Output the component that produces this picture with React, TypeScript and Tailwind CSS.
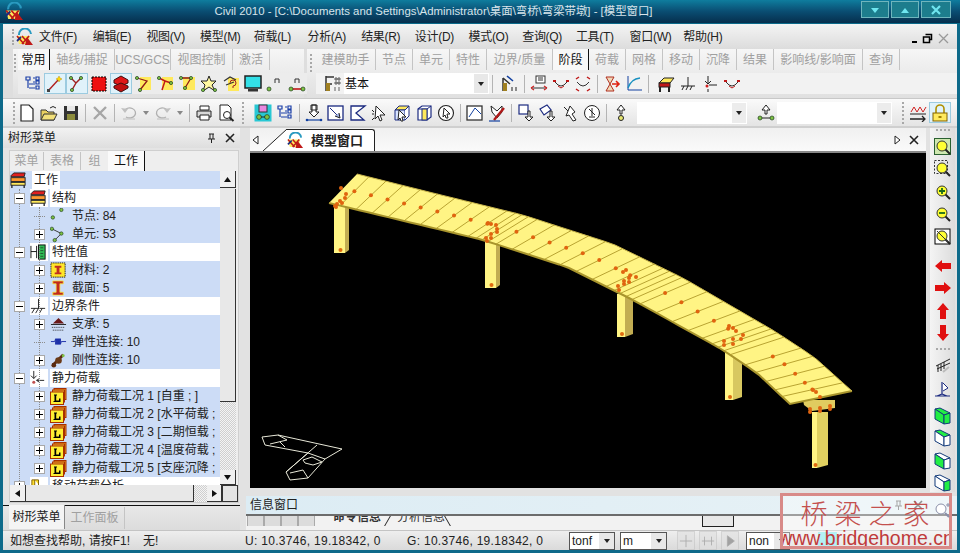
import React from 'react';

const FONT = "font-['Liberation_Sans','Noto_Sans_CJK_SC',sans-serif]";

// ---- small svg helpers ----
const N = ({ x, y, r = 1.6 }: { x: number; y: number; r?: number }) => (
  <circle cx={x} cy={y} r={r} fill="#7dc242" stroke="#1f3d1f" strokeWidth="0.7" />
);

const Lens = ({ children, box }: { children?: React.ReactNode; box?: boolean }) => (
  <>
    {box && <rect x="1" y="1" width="15" height="15" fill="#fff" stroke="#000" strokeWidth="1" />}
    <circle cx="8" cy="8" r="5" fill="#ffff33" stroke="#333" strokeWidth="1" />
    <path d="M11.5 11.5L16 16" stroke="#222" strokeWidth="2" />
    {children}
  </>
);

const Cube = ({ face }: { face: string }) => {
  const top = face === 'all' || face === 'top' ? '#22ee44' : '#fff';
  const left = face === 'all' || face === 'left' ? '#22ee44' : '#fff';
  const front = face === 'all' || face === 'front' ? '#22ee44' : '#fff';
  return (
    <>
      <path d="M1 2L6 1L16 6L10 8Z" fill={top} stroke="#123a7a" />
      <path d="M1 2L10 8V17L1 12Z" fill={left} stroke="#123a7a" />
      <path d="M10 8L16 6V16L10 17Z" fill={front} stroke="#123a7a" />
    </>
  );
};

const LoadIcon = () => (
  <svg width="17" height="17" viewBox="0 0 17 17" className="shrink-0">
    <rect x="4" y="0.5" width="12" height="11" fill="#f0a020" stroke="#a83000" />
    <rect x="2.5" y="2" width="12" height="12" fill="#f6b030" stroke="#a83000" />
    <rect x="0.5" y="4" width="13" height="12.5" fill="#ffee33" stroke="#a83000" />
    <path d="M4 6.5H7V7.5H6.2V12.5H9V10.5H10.5V14H3.5V13H4.5V7.5H4Z" fill="#000" />
  </svg>
);

const icons: Record<string, React.ReactNode> = {
  tree: <path d="M2 2H6V5H2ZM9 3H11M9 7H11M5 9H11M5 13H11M4 5V13M12 2H15V5H12ZM12 6H15V9H12ZM12 11H15V14H12Z" fill="none" stroke="#1b3fa8" strokeWidth="1.2" />,
  wand: <><path d="M2 16L13 4" stroke="#b02020" strokeWidth="1.4" /><path d="M13 1L14 3L16 4L14 5L13 7L12 5L10 4L12 3Z" fill="#ffd800" stroke="#b08000" strokeWidth="0.4" /><rect x="1" y="14" width="3" height="3" fill="#444" /></>,
  nodeLine: <><path d="M3 3L8 8M13 3L8 8L4 15" stroke="#a02020" strokeWidth="1.4" fill="none" /><N x={3} y={3} /><N x={13} y={3} /><N x={4} y={15} /></>,
  redSq: <><rect x="2" y="2" width="14" height="14" fill="#ee1111" stroke="#000" strokeDasharray="2 1" /></>,
  layers: <><path d="M9 1L16 5V8L9 11L2 8V5Z" fill="#e01818" stroke="#401010" /><path d="M9 8L16 11V13L9 17L2 13V11Z" fill="#c01010" stroke="#401010" /></>,
  yNode1: <><rect x="6" y="2" width="11" height="13" fill="#ffe95c" /><path d="M3 3L13 6L6 15" stroke="#901818" strokeWidth="1.3" fill="none" /><N x={3} y={3} /><N x={6} y={15} /></>,
  yNode2: <><rect x="6" y="2" width="11" height="13" fill="#ffe95c" /><path d="M3 3L9 6L6 15M9 6L15 8" stroke="#c01818" strokeWidth="1.5" fill="none" /><N x={3} y={3} /><N x={15} y={8} /></>,
  yNode3: <><rect x="5" y="2" width="12" height="13" fill="#ffe95c" /><path d="M3 3H13L7 13" stroke="#901818" strokeWidth="1.3" fill="none" /><N x={3} y={3} /><N x={13} y={3} /><N x={7} y={13} /></>,
  star: <><path d="M9 1L11 6H16L12 10L15 16L9 12L3 16L5 10L1 6H7Z" fill="#fff8a0" stroke="#222" /><N x={3} y={15} /><N x={15} y={15} /></>,
  help: <><rect x="6" y="3" width="11" height="13" fill="#ffe95c" /><path d="M2 6L8 2L14 5M4 10L12 7" stroke="#333" fill="none" strokeWidth="1.2" /><path d="M8 8A3 3 0 1 1 11 11V13" stroke="#a02020" fill="none" /></>,
  monitor: <><rect x="1" y="1" width="16" height="12" fill="#33e0e8" stroke="#222" strokeWidth="1.5" /><rect x="4" y="14" width="10" height="2.5" fill="#333" /></>,
  n1: <><N x={3} y={14} r={2} /><path d="M9 8V4H13V8" stroke="#333" fill="none" /></>,
  n2: <><path d="M3 14H15" stroke="#c01818" strokeWidth="1.6" /><N x={3} y={14} r={2} /><N x={15} y={14} r={2} /><path d="M7 8V4H11V8" stroke="#333" fill="none" /></>,
  sectionT: <><path d="M2 1V16M2 2H10M2 9H8" stroke="#333" strokeWidth="1.5" /><rect x="2" y="8" width="4" height="8" fill="#a08020" /><path d="M11 3h2v2h-2zM14 3h2v2h-2zM11 7h2v2h-2zM11 12V16M15 12V16M14 7h2v2h-2z" stroke="#222" fill="none" strokeWidth="0.7" /></>,
  sectionT2: <><path d="M2 3V16M2 3L9 9" stroke="#333" strokeWidth="1.5" /><path d="M6 1L12 6" stroke="#1240a0" strokeWidth="1.6" /><rect x="2" y="8" width="4" height="8" fill="#a08020" /><path d="M11 12V16M15 12V16" stroke="#222" /></>,
  ruler: <><rect x="6" y="1" width="9" height="7" fill="#fff" stroke="#333" /><path d="M8 3H13M8 5H13M1 13H17" stroke="#333" /><path d="M1 13L4 11M1 13L4 15M17 13L14 11M17 13L14 15" stroke="#d02020" strokeWidth="1.2" /></>,
  sag: <><path d="M1 6H4M14 6H17" stroke="#c01818" strokeWidth="2" /><path d="M3 7Q9 15 15 7" stroke="#333" fill="none" /><path d="M6 11L9 13L12 11" stroke="#c01818" fill="none" /></>,
  sag2: <><path d="M2 4L5 2M16 4L13 2M2 14L5 16M16 14L13 16" stroke="#c01818" strokeWidth="1.5" /><path d="M3 7Q9 15 15 7" stroke="#333" fill="none" /></>,
  hourglass: <><path d="M3 2H11L7 9L11 16H3L7 9Z" fill="#f0d8b8" stroke="#b03020" /><path d="M9 9H16M13 6L16 9L13 12" stroke="#e02010" strokeWidth="1.6" fill="none" /></>,
  curve: <><path d="M3 1V15H17" stroke="#1240a0" fill="none" /><path d="M3 13Q6 4 15 3" stroke="#1890c0" fill="none" strokeWidth="1.3" /></>,
  block: <><path d="M2 8L7 3H17L13 8Z" fill="#ffe95c" stroke="#222" /><rect x="2" y="8" width="11" height="4" fill="#c01818" stroke="#222" /><path d="M3 12V17M12 12V17" stroke="#222" strokeWidth="2" /></>,
  ground: <path d="M9 2V11M2 11H16M3 15L5 11M7 15L9 11M11 15L13 11" stroke="#222" fill="none" />,
  loadArrow: <><path d="M7 1V9M4 6L7 9L10 6M8 10H16" stroke="#222" fill="none" /><circle cx="6" cy="11" r="1.5" fill="#d02020" /><path d="M7 14V17" stroke="#222" /></>,
  page: <path d="M3 1H11L15 5V17H3Z" fill="#fff" stroke="#222" strokeWidth="1.2" />,
  open: <><path d="M1 6H6L8 8H14V16H1Z" fill="#e8d060" stroke="#333" /><path d="M1 16L4 10H17L14 16Z" fill="#f2e07a" stroke="#333" /><path d="M10 4Q13 1 16 4" stroke="#222" fill="none" /></>,
  save: <><rect x="2" y="2" width="14" height="14" fill="#333" /><rect x="5" y="2" width="8" height="5" fill="#e8e8e8" /><rect x="5" y="10" width="8" height="6" fill="#8c8c3c" /></>,
  del: <path d="M3 3L15 15M15 3L3 15" stroke="#a6a6a6" strokeWidth="2.4" />,
  undo: <><path d="M4 7A6 5 0 1 1 6 13" stroke="#b0b0b0" fill="none" strokeWidth="1.3" /><path d="M1 4L5 9L8 5Z" fill="#c0c0c0" /><path d="M3 15H15" stroke="#c0c0c0" /></>,
  redo: <><path d="M14 7A6 5 0 1 0 12 13" stroke="#b0b0b0" fill="none" strokeWidth="1.3" /><path d="M17 4L13 9L10 5Z" fill="#c0c0c0" /><path d="M3 15H15" stroke="#c0c0c0" /></>,
  print: <><path d="M5 2H14V6H5Z" fill="#fff" stroke="#222" /><path d="M2 7H16V13H2Z" fill="#d8d8d8" stroke="#222" /><path d="M5 11H14V16H5Z" fill="#fff" stroke="#222" /></>,
  preview: <><path d="M3 1H11L14 4V16H3Z" fill="#fff" stroke="#222" /><circle cx="10" cy="11" r="3.5" fill="#fff" stroke="#222" /><path d="M12.5 13.5L16.5 17" stroke="#222" strokeWidth="2" /></>,
  group: <><rect x="0.5" y="0.5" width="17" height="17" fill="#29c8d4" /><rect x="5" y="1" width="8" height="7" fill="#e888e0" stroke="#333" /><N x={5} y={13} r={2.4} /><N x={13} y={13} r={2.4} /><path d="M7 13H11" stroke="#222" /></>,
  nodeDown: <><path d="M6 6H12V1H6ZM4 8L9 13L14 8H11V1H7V8Z" fill="#fff" stroke="#222" /><path d="M1 16H17" stroke="#1240a0" strokeWidth="1.2" /><circle cx="2" cy="16" r="1.3" fill="#1240a0" /><circle cx="16" cy="16" r="1.3" fill="#1240a0" /></>,
  diagBox: <><rect x="1" y="2" width="15" height="14" fill="#fff" stroke="#1b2a80" strokeWidth="1.3" /><path d="M3 4L13 14" stroke="#1b2a80" /><path d="M8 12L13 14L12 9" fill="#a0b0e0" stroke="#222" /></>,
  polyBox: <path d="M2 2H16L7 9L15 16H2Z" fill="#fff" stroke="#1b2a80" strokeWidth="1.3" />,
  cursor: <path d="M5 2L14 11H9L11 16L9 17L7 12L4 15Z M1 6L3 8M1 10H3M3 14L1 16" fill="#fff" stroke="#222" />,
  boxCursor: <><path d="M2 6L6 2H16L12 6Z" fill="#ffe95c" stroke="#1b2a80" /><path d="M2 6H12V16H2Z" fill="#d8e4ff" stroke="#1b2a80" /><path d="M12 6L16 2V12L12 16" fill="#fff" stroke="#1b2a80" /><path d="M6 6L13 13H9L10 17L8 17L7 14L5 16Z" fill="#fff" stroke="#222" /></>,
  box3d: <><path d="M3 5L7 2H16V13L12 16H3Z" fill="#fff" stroke="#1b2a80" strokeWidth="1.2" /><path d="M3 5H12V16M12 5L16 2" stroke="#1b2a80" fill="none" /><rect x="7" y="5" width="5" height="11" fill="#ffe95c" stroke="#1b2a80" /></>,
  circCursor: <><circle cx="9" cy="9" r="7.5" fill="#fff" stroke="#222" strokeWidth="1.1" /><path d="M7 4L13 10H10L11 14H9L8 11L6 13Z" fill="#fff" stroke="#222" /></>,
  dispBox: <><rect x="1" y="2" width="15" height="14" fill="#fff" stroke="#333" strokeWidth="1.3" /><path d="M3 13L9 4L15 10" stroke="#1240a0" fill="none" /></>,
  pencil: <><path d="M3 2L9 7L14 2V8L9 14L4 8Z" fill="#fff" stroke="#222" /><path d="M6 16L16 4" stroke="#b01818" strokeWidth="2.4" /><path d="M1 17H12" stroke="#1240a0" strokeWidth="1.2" /></>,
  nodeBox: <><rect x="2" y="1" width="9" height="9" fill="#fff" stroke="#1b2a80" strokeWidth="1.2" /><path d="M11 7V13H8L12 17L16 13H13V7Z" fill="#fff" stroke="#222" /></>,
  nodeBox2: <><path d="M1 5L8 1L12 6L5 11Z" fill="#fff" stroke="#1b2a80" strokeWidth="1.2" /><path d="M11 7V13H8L12 17L16 13H13V7Z" fill="#fff" stroke="#222" /></>,
  pin: <path d="M3 3L7 7M9 2L14 8L11 10L15 16L12 17L8 11L5 12Z" fill="#fff" stroke="#222" />,
  circNum: <><circle cx="9" cy="9" r="7.5" fill="#fff" stroke="#222" /><path d="M6 5L12 11M6 13H12M9 4V12" stroke="#222" /></>,
  arrowNode: <><path d="M9 1L13 6H10V10H8V6H5Z" fill="#fff" stroke="#222" /><circle cx="9" cy="14" r="2.5" fill="#e8e870" stroke="#222" /></>,
  arrowNodes: <><path d="M9 1L13 6H10V10H8V6H5Z" fill="#fff" stroke="#222" /><path d="M1 14H17" stroke="#222" /><N x={3} y={14} r={2} /><N x={15} y={14} r={2} /></>,
  mark: <><path d="M2 8L5 3L8 8L11 3L14 8L17 3" stroke="#d02020" fill="none" /><path d="M1 10H17" stroke="#222" /><path d="M1 15H16M13 12L16 15L13 18" stroke="#222" fill="none" strokeWidth="1.3" /></>,
  lock: <><path d="M5 9V5A4 4 0 0 1 13 5V9" stroke="#b09000" fill="none" strokeWidth="1.6" /><rect x="2" y="9" width="14" height="8" fill="#ffe95c" stroke="#806000" /><rect x="7.5" y="12" width="3" height="2" fill="#a08000" /></>,
  zoomFit: <><rect x="0.5" y="0.5" width="16" height="16" fill="#cfe8b0" stroke="#2a6030" /><circle cx="8" cy="8" r="5" fill="#ffff33" stroke="#333" /><path d="M11.5 11.5L16 16" stroke="#222" strokeWidth="2" /></>,
  zoomWin: <><rect x="0.5" y="0.5" width="13" height="13" fill="none" stroke="#333" strokeDasharray="2 1.5" /><Lens /></>,
  zoomIn: <Lens><path d="M5 8H11M8 5V11" stroke="#1a6a1a" strokeWidth="1.8" /></Lens>,
  zoomOut: <Lens><path d="M5 8H11" stroke="#1a6a1a" strokeWidth="1.8" /></Lens>,
  zoomAll: <Lens box><path d="M3 3L14 14" stroke="#333" /></Lens>,
  left: <path d="M1 9L8 3V6H17V12H8V15Z" fill="#e01010" />,
  right: <path d="M17 9L10 3V6H1V12H10V15Z" fill="#e01010" />,
  up: <path d="M9 1L3 8H6V17H12V8H15Z" fill="#e01010" />,
  down: <path d="M9 17L3 10H6V1H12V10H15Z" fill="#e01010" />,
  perspective: <><path d="M2 9L16 2M3 12L16 6M4 8V15M7 7V14M10 5V12" stroke="#222" fill="none" /><path d="M9 15L15 10" stroke="#bbb" strokeWidth="2" /></>,
  axisFlag: <><path d="M8 2V14M1 16H16M8 14L3 16M8 14L13 16" stroke="#1b2a80" fill="none" strokeWidth="1.2" /><path d="M9 3L14 8L9 11" fill="#fff" stroke="#1b2a80" /></>,
  cubeAll: <Cube face="all" />,
  cubeTop: <Cube face="top" />,
  cubeLeft: <Cube face="left" />,
  cubeFront: <Cube face="front" />,
  tbStruct: <><path d="M1 4L4 1H16L15 5H1Z" fill="#e02020" stroke="#222" /><rect x="1" y="6" width="15" height="4" fill="#ff9a30" stroke="#222" /><rect x="1" y="11" width="15" height="3" fill="#ffe95c" stroke="#222" /><path d="M2 14V17M15 14V17" stroke="#222" strokeWidth="1.4" /></>,
  tbH: <><path d="M1 2V15M7 2V15M1 8H7" stroke="#111" /><rect x="9" y="1" width="7" height="15" fill="#2fbb55" stroke="#111" /><path d="M11 4H14M11 7H14M11 10H14M11 13H14" stroke="#111" strokeWidth="0.6" /></>,
  tbGround: <><path d="M9 1V11M1 11H16" stroke="#222" /><path d="M2 16L5 11M6 16L9 11M10 16L13 11" stroke="#222" /></>,
  tbLoad: <><path d="M4 1V9M1 6L4 9L7 6M7 11H15" stroke="#222" fill="none" /><path d="M7 11L10 9M7 11L10 13" stroke="#222" /><circle cx="4" cy="13" r="1.6" fill="#c05050" /></>,
  tbNodes: <><N x={12} y={2} r={1.8} /><N x={3} y={10} r={1.8} /></>,
  tbElem: <><path d="M2 3L12 8L5 15" stroke="#333" fill="none" /><N x={2} y={3} r={1.8} /><N x={12} y={8} r={1.8} /><N x={5} y={15} r={1.8} /></>,
  tbMat: <><rect x="1" y="1" width="15" height="15" fill="#ffe62a" stroke="#222" strokeDasharray="1.5 .8" /><path d="M5 4H12V6H10V11H12V13H5V11H7V6H5Z" fill="#c03020" /></>,
  tbSec: <path d="M3 1H14V4H10.5V13H14V16H3V13H6.5V4H3Z" fill="#c02a20" stroke="#ffe62a" strokeWidth="0.8" />,
  tbSupport: <><path d="M9 2L15 8H3Z" fill="#6a1818" /><path d="M1 9H17" stroke="#222" /><path d="M2 12H16M3 15H15" stroke="#222" strokeDasharray="1 1" /></>,
  tbSpring: <path d="M1 8H5L6 5V11L7 5V11L8 5V11L9 5V11L10 5V11L11 5V11L12 8H17" stroke="#1b2ea8" fill="none" />,
  tbRigid: <><path d="M3 14L14 3" stroke="#5a2a10" strokeWidth="3" /><circle cx="4" cy="14" r="2.5" fill="#5a2a10" /><circle cx="9" cy="9" r="3.5" fill="#6a3a18" /><circle cx="14" cy="4" r="1.5" fill="#7dc242" /></>,
  tbMove: <path d="M2 2H9V9H2ZM5 2V14H15" fill="#ffe030" stroke="#806000" />,
};

const Ico = ({ name, size = 18 }: { name: string; size?: number }) => (
  <svg width={size} height={size} viewBox="0 0 18 18" className="shrink-0">
    {icons[name]}
  </svg>
);

const Btn = ({ name, active, w = 'w-[22px]' }: { name: string; active?: boolean; w?: string }) => (
  <div className={`${w} h-[21px] shrink-0 flex items-center justify-center ${active ? 'bg-[#e0f2fa] border border-[#9ccbe0]' : ''}`}>
    <Ico name={name} />
  </div>
);

const Sep = ({ h = 'h-[18px]' }: { h?: string }) => <div className={`w-px ${h} bg-[#b4b4b4] mx-[3px] shrink-0`} />;

const Grip = ({ h = 'h-[22px]' }: { h?: string }) => (
  <div className={`w-[3px] ${h} shrink-0 border-l-2 border-dotted border-[#a8a8a8]`} />
);

const Caret = () => <div className="w-0 h-0 border-x-[3px] border-x-transparent border-t-[4px] border-t-[#222]" />;

// ---- title + menu ----
const AppLogo = ({ size }: { size: number }) => (
  <svg width={size} height={size} viewBox="0 0 18 18" className="shrink-0">
    <path d="M3 7A6 6 0 0 1 15 6" stroke="#2a9ac0" strokeWidth="2" fill="none" />
    <path d="M1 8H14L12 16H3Z" fill="#ffe95c" />
    <path d="M1 8L8 16M6 8L13 16M13 8L6 16" stroke="#c01818" strokeWidth="1.6" />
    <path d="M11 9L17 17H9Z" fill="#c01818" />
    <path d="M1 13L5 9" stroke="#1b2a80" strokeWidth="1.8" />
  </svg>
);

const TitleBar = () => (
  <div className="h-[24px] shrink-0 flex items-center pl-[5px] pr-[9px] bg-gradient-to-b from-[#0f7d9e] via-[#0a4d72] to-[#062f4d] border-b border-[#0a6a8a]">
    <AppLogo size={19} />
    <div className="flex-1 text-center text-[#d8e4ea] text-[11.4px] pr-[18px] whitespace-nowrap">
      Civil 2010 - [C:\Documents and Settings\Administrator\桌面\弯桥\弯梁带墩] - [模型窗口]
    </div>
    <div className="flex gap-[2px] self-start pt-[1px]">
      {['M3 5H11L7 10Z', 'M3 10H11L7 5Z', 'M3 3L11 11M11 3L3 11'].map((d, i) => (
        <div key={i} className={`${i === 2 ? 'w-[30px]' : 'w-[28px]'} h-[17px] flex items-center justify-center bg-[#1d7d8d] border border-[#6fb5bd]`}>
          <svg width="14" height="14" viewBox="0 0 14 14">
            <path d={d} fill="#6fe6f0" stroke={i === 2 ? '#6fe6f0' : 'none'} strokeWidth="2.2" />
          </svg>
        </div>
      ))}
    </div>
  </div>
);

const MENUS = ['文件(F)', '编辑(E)', '视图(V)', '模型(M)', '荷载(L)', '分析(A)', '结果(R)', '设计(D)', '模式(O)', '查询(Q)', '工具(T)', '窗口(W)', '帮助(H)'];

const MenuBar = () => (
  <div className="h-[25px] shrink-0 flex items-center bg-gradient-to-b from-[#f4f4f4] to-[#dcdcdc] pl-[9px] pr-[8px] text-[12px] text-[#222]">
    <Grip h="h-[16px]" />
    <div className="ml-[1px]"><AppLogo size={18} /></div>
    <div className="flex ml-[5px] tracking-[-0.3px]">
      {MENUS.map(m => <span key={m} className="w-[53.7px] whitespace-nowrap">{m}</span>)}
    </div>
    <div className="ml-auto flex items-center gap-[5px] pt-[4px] text-[#222]">
      <div className="w-[5px] h-[2px] bg-black mt-[6px]" />
      <svg width="11" height="11" viewBox="0 0 11 11"><path d="M3.5 1.5H9.5V6.5H7.5M1.5 4H7.5V9.5H1.5Z" fill="none" stroke="#000" strokeWidth="1.5" /></svg>
      <svg width="11" height="11" viewBox="0 0 11 11"><path d="M1 1L10 10M10 1L1 10" stroke="#999" strokeWidth="1.3" /></svg>
    </div>
  </div>
);

// ---- toolbars ----
const TabText = ({ items, active }: { items: [string, string][]; active: string }) => (
  <div className="flex items-center h-[21px] text-[12px] text-[#a0a0a0]">
    {items.map(([t, w]) => (
      <div key={t} className={`${w} h-full flex items-center justify-center whitespace-nowrap border-r ${t === active ? 'text-[#111] bg-[#f8f8f8] border-[#111]' : 'border-[#c4c4c4]'}`}>
        <span className={t === active ? 'text-[#111]' : ''}>{t}</span>
      </div>
    ))}
  </div>
);

const LEFT_TABS: [string, string][] = [['常用', 'w-[32px]'], ['轴线/捕捉', 'w-[65px]'], ['UCS/GCS', 'w-[56px]'], ['视图控制', 'w-[62px]'], ['激活', 'w-[37px]']];
const RIGHT_TABS: [string, string][] = [['建模助手', 'w-[60px]'], ['节点', 'w-[37px]'], ['单元', 'w-[37px]'], ['特性', 'w-[37px]'], ['边界/质量', 'w-[66px]'], ['阶段', 'w-[36px]'], ['荷载', 'w-[37px]'], ['网格', 'w-[37px]'], ['移动', 'w-[37px]'], ['沉降', 'w-[37px]'], ['结果', 'w-[37px]'], ['影响线/影响面', 'w-[89px]'], ['查询', 'w-[37px]']];

const Toolbars = () => (
  <div className="h-[50px] shrink-0 flex bg-[#dedede] pl-[10px] gap-[3px] border-b border-[#c8c8c8]">
    <div className="w-[291px] h-[49px] bg-gradient-to-b from-[#f6f6f6] to-[#e0e0e0] flex">
      <div className="pt-[5px] pl-[1px] pr-[1px]"><Grip h="h-[18px]" /></div>
      <div className="flex-1 flex flex-col">
        <TabText items={LEFT_TABS} active="常用" />
        <div className="flex items-center mt-[3px] pl-[4px] bg-[#ececec]">
          {['tree', 'wand', 'nodeLine', 'redSq', 'layers', 'yNode1', 'yNode2', 'yNode3', 'star', 'help', 'monitor', 'n1', 'n2'].map(n => (
            <Btn key={n} name={n} active={n === 'wand' || n === 'nodeLine' || n === 'layers'} />
          ))}
        </div>
      </div>
    </div>
    <div className="flex-1 h-[49px] bg-gradient-to-b from-[#f6f6f6] to-[#e0e0e0] flex">
      <div className="pt-[5px] pl-[3px] pr-[3px]"><Grip h="h-[18px]" /></div>
      <div className="flex-1 flex flex-col">
        <TabText items={RIGHT_TABS} active="阶段" />
        <div className="flex items-center mt-[3px] bg-[#f2f2f2] pl-[6px] pr-[2px]">
          <Btn name="sectionT" />
          <div className="w-[145px] h-[21px] bg-white flex items-center pl-[1px] text-[12px] text-[#111] relative">
            基本
            <div className="absolute right-[1px] top-[1px] w-[14px] h-[19px] bg-[#e8e8e8] flex items-center justify-center"><Caret /></div>
          </div>
          <Sep />
          <div className="ml-[3px]"><Btn name="sectionT2" /></div>
          <Sep />
          <Btn name="ruler" /><Btn name="sag" /><Btn name="sag2" />
          <Sep />
          <Btn name="hourglass" /><Btn name="curve" />
          <div className="mr-[3px]"><Sep /></div>
          <Btn name="block" /><Btn name="ground" /><Btn name="loadArrow" /><Btn name="sag" />
        </div>
      </div>
    </div>
  </div>
);

const Combo = ({ w }: { w: string }) => (
  <div className={`${w} h-[22px] bg-white relative shrink-0`}>
    <div className="absolute right-[1px] top-[1px] w-[14px] h-[20px] bg-[#ececec] flex items-center justify-center"><Caret /></div>
  </div>
);

const Toolbar3 = () => (
  <div className="h-[29px] shrink-0 flex items-center bg-gradient-to-b from-[#fafafa] to-[#e4e4e4] pl-[10px] border-b-2 border-[#cfcfcf]">
    <Grip />
    <div className="flex items-center">
      <Btn name="page" /><Btn name="open" /><Btn name="save" /><Sep />
      <Btn name="del" /><Sep />
      <Btn name="undo" /><div className="mx-[3px] opacity-50"><Caret /></div>
      <Btn name="redo" /><div className="mx-[3px] opacity-50"><Caret /></div><Sep />
      <Btn name="print" /><Btn name="preview" />
    </div>
    <div className="ml-[5px]"><Grip /></div>
    <div className="ml-[7px] flex items-center">
      <Btn name="group" /><Btn name="tree" /><Sep />
      <Btn name="nodeDown" /><Btn name="diagBox" /><Btn name="polyBox" /><Btn name="cursor" /><Btn name="boxCursor" /><Btn name="box3d" /><Btn name="circCursor" /><Sep />
      <Btn name="dispBox" /><Btn name="pencil" /><Sep />
      <Btn name="nodeBox" /><Btn name="nodeBox2" /><Btn name="pin" /><Btn name="circNum" /><Sep />
      <Btn name="arrowNode" />
      <div className="ml-[5px]"><Combo w="w-[110px]" /></div>
      <div className="ml-[8px]"><Btn name="arrowNodes" /></div>
      <Combo w="w-[115px]" />
    </div>
    <div className="ml-[10px]"><Grip /></div>
    <div className="ml-[2px] flex items-center">
      <Btn name="mark" /><Btn name="lock" active />
    </div>
  </div>
);

// ---- tree ----
type Row = { label: string; icon?: string; level: 1 | 2; box?: '+' | '-'; load?: boolean };

const ROWS: Row[] = [
  { label: '结构', icon: 'tbStruct', level: 1, box: '-' },
  { label: '节点: 84', icon: 'tbNodes', level: 2 },
  { label: '单元: 53', icon: 'tbElem', level: 2, box: '+' },
  { label: '特性值', icon: 'tbH', level: 1, box: '-' },
  { label: '材料: 2', icon: 'tbMat', level: 2, box: '+' },
  { label: '截面: 5', icon: 'tbSec', level: 2, box: '+' },
  { label: '边界条件', icon: 'tbGround', level: 1, box: '-' },
  { label: '支承: 5', icon: 'tbSupport', level: 2, box: '+' },
  { label: '弹性连接: 10', icon: 'tbSpring', level: 2 },
  { label: '刚性连接: 10', icon: 'tbRigid', level: 2, box: '+' },
  { label: '静力荷载', icon: 'tbLoad', level: 1, box: '-' },
  { label: '静力荷载工况 1 [自重 ; ]', level: 2, box: '+', load: true },
  { label: '静力荷载工况 2 [水平荷载 ;', level: 2, box: '+', load: true },
  { label: '静力荷载工况 3 [二期恒载 ;', level: 2, box: '+', load: true },
  { label: '静力荷载工况 4 [温度荷载 ;', level: 2, box: '+', load: true },
  { label: '静力荷载工况 5 [支座沉降 ;', level: 2, box: '+', load: true },
  { label: '移动荷载分析', icon: 'tbMove', level: 1, box: '+' },
];

const TreeBox = ({ sign }: { sign: string }) => (
  <div className="w-[11px] h-[11px] bg-white border border-[#a8a8a8] flex items-center justify-center relative z-10">
    <div className="w-[7px] h-px bg-black" />
    {sign === '+' && <div className="absolute w-px h-[7px] bg-black" />}
  </div>
);

const TreeRow = ({ row }: { row: Row }) => {
  const group = row.level === 1;
  return (
    <div className={`h-[18px] shrink-0 flex items-center text-[12px] text-[#222] whitespace-nowrap ${group ? 'pl-[4px]' : 'pl-[24px]'} bg-[#ccdcf6]`}>
      <div className="w-[11px] flex justify-center relative z-10">{row.box ? <TreeBox sign={row.box} /> : <div className="w-[11px] h-px border-t border-dotted border-[#8c8c8c]" />}</div>
      <div className={`${group ? 'ml-[5px] bg-white h-[18px] items-center flex' : 'ml-[5px]'} w-[18px] shrink-0`}>
        {row.load ? <LoadIcon /> : <Ico name={row.icon ?? 'tbNodes'} size={17} />}
      </div>
      <div className={group ? 'ml-[2px] pl-[2px] bg-white h-[18px] flex-1 flex items-center' : 'ml-[4px]'}>{row.label}</div>
    </div>
  );
};

const ScrollBtn = ({ d, className }: { d: string; className: string }) => (
  <div className={`flex items-center justify-center bg-[#f0f0f0] border-r border-b border-[#333] shrink-0 ${className}`}>
    <svg width="9" height="9" viewBox="0 0 9 9"><path d={d} fill="#111" /></svg>
  </div>
);

const TreePanel = () => (
  <div className="w-[237px] shrink-0 flex flex-col bg-[#e4e4e4]">
    <div className="h-[20px] shrink-0 flex items-center pl-[5px] pr-[5px] text-[12px] text-[#222] bg-gradient-to-b from-[#f2f2f2] to-[#dedede]">
      树形菜单
      <svg width="9" height="11" viewBox="0 0 9 11" className="ml-auto mr-[9px]"><path d="M2 1H7M3 1V6M6 1V6M1 6H8M4.5 6V10" stroke="#222" fill="none" /></svg>
      <svg width="10" height="10" viewBox="0 0 10 10"><path d="M1 1L9 9M9 1L1 9" stroke="#222" strokeWidth="1.6" /></svg>
    </div>
    <div className="ml-[6px] mr-[1px] mt-[2px] h-[353px] shrink-0 flex flex-col bg-[#eeeeee] border border-[#cfcfcf]">
      <div className="h-[20px] flex items-center shrink-0 text-[12px] text-[#a0a0a0]">
        <div className="w-[34px] text-center border-r border-[#c4c4c4]">菜单</div>
        <div className="w-[37px] text-center border-r border-[#c4c4c4]">表格</div>
        <div className="w-[27px] text-center">组</div>
        <div className="w-[37px] h-full bg-[#fafafa] text-[#111] flex items-center justify-center border-r border-[#111]">工作</div>
      </div>
      <div className="h-[314px] shrink-0 flex relative">
        <div className="w-[210px] h-[314px] bg-[#ccdcf6] overflow-hidden flex flex-col shrink-0 relative">
          <div className="absolute left-[9px] top-[18px] h-[300px] border-l border-dotted border-[#8c8c8c]" />
          <div className="absolute left-[29px] top-[36px] h-[252px] border-l border-dotted border-[#8c8c8c]" />
          <div className="h-[18px] shrink-0 flex items-center text-[12px] text-[#222]">
            <Ico name="tbStruct" size={17} />
            <span className="ml-[5px] bg-white px-[2px]">工作</span>
          </div>
          {ROWS.map(r => <TreeRow key={r.label} row={r} />)}
        </div>
        <div className="w-[16px] h-[314px] flex flex-col bg-[#e6e6e6]">
          <ScrollBtn d="M4.5 2L8 7H1Z" className="h-[17px]" />
          <div className="h-[213px] bg-[#e8e8e8] border-b border-[#333] border-r mt-px" />
          <div className="flex-1 bg-[repeating-conic-gradient(#cfcfcf_0_25%,#f4f4f4_0_50%)] bg-[length:2px_2px]" />
          <ScrollBtn d="M4.5 7L8 2H1Z" className="h-[15px]" />
        </div>
      </div>
      <div className="h-[17px] flex shrink-0">
        <ScrollBtn d="M2 4.5L7 1V8Z" className="w-[16px]" />
        <div className="w-[168px] bg-[#e8e8e8] border-r border-b border-[#333]" />
        <div className="flex-1 bg-[repeating-conic-gradient(#cfcfcf_0_25%,#f4f4f4_0_50%)] bg-[length:2px_2px]" />
        <ScrollBtn d="M7 4.5L2 1V8Z" className="w-[15px]" />
        <div className="w-[16px] bg-[#e4e4e4] border border-[#333]" />
      </div>
    </div>
    <div className="flex-1 flex items-start border-t border-[#111] text-[12px] mt-[2px] pl-[6px] bg-gradient-to-b from-[#e8e8e8] to-[#dcdcdc]">
      <div className="w-[56px] h-[24px] bg-[#f4f4f4] text-[#222] flex items-center justify-center -mt-px border-r border-[#888]">树形菜单</div>
      <div className="w-[60px] h-[22px] text-[#a0a0a0] flex items-center justify-center border-r border-[#c4c4c4] mt-[1px]">工作面板</div>
    </div>
  </div>
);

// ---- bridge drawing ----
// front edge points with the offset to the back edge of the deck
const DECK: [number, number, number, number][] = [
  [329, 203, 28, -29], [400, 220, 33, -27], [483, 240, 40, -25], [567, 267, 46, -23],
  [633, 300, 50, -22], [723, 350, 53, -18], [757, 373, 57, -16], [790, 404, 62, -13],
];
const OX = 250;
const OY = 153;

const frontAt = (x: number) => {
  let i = 0;
  while (i < DECK.length - 2 && x > DECK[i + 1][0]) i++;
  const a = DECK[i];
  const b = DECK[i + 1];
  const f = (x - a[0]) / (b[0] - a[0]);
  const y = a[1] + (b[1] - a[1]) * f;
  const dx = a[2] + (b[2] - a[2]) * f;
  const dy = a[3] + (b[3] - a[3]) * f;
  return { x: x - OX, y: y - OY, bx: x + dx - OX, by: y + dy - OY };
};

const SAMPLES = Array.from({ length: 47 }, (_, i) => 329 + i * 10 > 790 ? 790 : 329 + i * 10).concat(790);
const DECK_POINTS = [
  ...SAMPLES.map(x => `${frontAt(x).bx},${frontAt(x).by}`),
  ...[...SAMPLES].reverse().map(x => `${frontAt(x).x},${frontAt(x).y}`),
].join(' ');
const FRONT_LINE = SAMPLES.map(x => `${frontAt(x).x},${frontAt(x).y}`).join(' ') + ` ${frontAt(790).bx},${frontAt(790).by}`;
const BACK_LINE = SAMPLES.map(x => `${frontAt(x).bx},${frontAt(x).by}`).join(' ');

const RIBS = [340, 356, 372, 388, 404, 420, 436, 452, 468, 496, 512, 528, 544, 560, 576, 592, 606, 640, 656, 672, 688, 702, 745, 756, 766, 775, 782];
const DENSE_RIBS = [476, 482, 488, 614, 620, 626, 632, 712, 718, 724, 730];
const EXTRA_DOTS: [number, number][] = [
  [341, 188], [346, 194], [345, 198], [340, 201], [337, 204], [336, 207], [335, 206], [342, 203],
  [487, 241], [486, 238], [491, 238], [491, 234], [497, 232], [497, 229], [488, 223], [491, 224], [496, 225],
  [619, 290], [618, 286], [624, 284], [624, 281], [629, 282], [629, 278], [626, 270], [623, 272], [636, 277],
  [724, 345], [724, 341], [733, 344], [733, 339], [741, 339], [743, 335], [729, 326], [733, 328], [736, 331],
  [810, 412], [810, 409], [820, 411], [820, 408], [830, 409], [830, 406], [820, 397], [813, 390], [816, 392],
];

const piers = [
  { x: 334, w: 11, s: 4, y: 205, h: 48, c: '#c2ad52' },
  { x: 485, w: 11, s: 4, y: 242, h: 46, c: '#c2ad52' },
  { x: 617, w: 8, s: 8, y: 294, h: 43, c: '#c2ad52' },
  { x: 725, w: 8, s: 9, y: 352, h: 48, c: '#d8c860' },
  { x: 812, w: 5, s: 11, y: 412, h: 56, c: '#e0d060' },
];

const BridgeSvg = () => (
  <svg width="676" height="335" viewBox="0 0 676 335" className="block shrink-0">
    <rect width="676" height="335" fill="#000" />
    {piers.map(p => (
      <g key={p.x} transform={`translate(${-OX} ${-OY})`}>
        <rect x={p.x} y={p.y} width={p.w} height={p.h} fill="#fff484" />
        <path d={`M${p.x + p.w} ${p.y}h${p.s}v${p.h - 3}l${-p.s} 3Z`} fill={p.c} />
        <circle cx={p.x + p.w / 2 + 1} cy={p.y + p.h - 3} r="2" fill="#e06a10" />
      </g>
    ))}
    <g transform={`translate(${-OX} ${-OY})`}>
      <path d="M803 400H835V408L812 411L804 405Z" fill="#e0cc60" />
    </g>
    <polygon points={DECK_POINTS} fill="#fff484" />
    <polyline points={FRONT_LINE} fill="none" stroke="#a8942c" strokeWidth="2" />
    <polyline points={BACK_LINE} fill="none" stroke="#c8b44a" strokeWidth="1" />
    {[...RIBS, ...DENSE_RIBS].map(x => {
      const r = frontAt(x);
      return <line key={x} x1={r.x} y1={r.y} x2={r.bx} y2={r.by} stroke="#b09a28" strokeWidth="0.9" />;
    })}
    {RIBS.map(x => {
      const r = frontAt(x);
      return <circle key={x} cx={(r.x + r.bx) / 2} cy={(r.y + r.by) / 2} r="2" fill="#e0640f" />;
    })}
    {EXTRA_DOTS.map((d, i) => <circle key={i} cx={d[0] - OX} cy={d[1] - OY} r="2" fill="#e0640f" />)}
    {/* UCS symbol bottom left */}
    <g transform="translate(-250 -153)" fill="none" stroke="#e8e8d8" strokeWidth="1">
      <path d="M262 437L278 435L342 449L325 459L308 478L290 480L286 472L317 445" />
      <path d="M262 437L265 445L308 453L286 472M308 453L325 459" />
      <path d="M270 444L287 440L278 435M280 442L285 447" />
      <path d="M303 460L312 457L322 462L313 465L305 463Z" />
      <path d="M290 473L303 470L308 478" />
    </g>
  </svg>
);

const SideTools = () => (
  <div className="w-[25px] shrink-0 flex flex-col items-center bg-gradient-to-r from-[#f4f4f4] to-[#dcdcdc] pt-[1px] gap-[4.5px] overflow-hidden ml-[4px]">
    <div className="w-[14px] border-t-2 border-dotted border-[#a8a8a8] mb-[2px]" />
    {['zoomFit', 'zoomWin', 'zoomIn', 'zoomOut', 'zoomAll'].map(n => <Ico key={n} name={n} />)}
    <div className="w-[14px] h-px bg-[#bbb] my-[1px]" />
    {['left', 'right', 'up', 'down'].map(n => <Ico key={n} name={n} />)}
    <div className="w-[14px] border-t-2 border-dotted border-[#a8a8a8] mb-[3px] mt-[1px]" />
    {['perspective', 'axisFlag'].map(n => <Ico key={n} name={n} />)}
    <div className="w-[14px] h-px bg-[#bbb]" />
    {['cubeAll', 'cubeTop', 'cubeLeft', 'cubeFront'].map(n => <Ico key={n} name={n} />)}
  </div>
);

const ModelArea = () => (
  <div className="flex-1 min-w-0 flex flex-col ml-[6px]">
    <div className="flex-1 flex min-h-0 ml-[4px]">
      <div className="w-[676px] flex flex-col shrink-0">
        <div className="h-[25px] shrink-0 flex items-end border-b-2 border-[#888] bg-gradient-to-b from-[#f0f0f0] to-[#fafafa] relative">
          <svg width="8" height="10" viewBox="0 0 8 10" className="absolute left-[2px] top-[7px]"><path d="M6 1L1 5L6 9Z" fill="#fff" stroke="#222" /></svg>
          <div className="ml-[13px] flex h-[22px] items-stretch relative">
            <svg width="24" height="22" viewBox="0 0 24 22" className="shrink-0"><path d="M0 22L24 0V22Z" fill="#fff" /><path d="M0 22L24 0" stroke="#222" /></svg>
            <div className="w-[88px] bg-white border-t border-r border-[#222] rounded-tr-[3px] flex items-center text-[13px] font-bold text-[#222]">
              <AppLogo size={17} />
              <span className="ml-[7px] whitespace-nowrap">模型窗口</span>
            </div>
          </div>
          <svg width="8" height="10" viewBox="0 0 8 10" className="absolute right-[25px] top-[7px]"><path d="M2 1L7 5L2 9Z" fill="#fff" stroke="#222" /></svg>
          <svg width="10" height="10" viewBox="0 0 10 10" className="absolute right-[7px] top-[7px]"><path d="M1 1L9 9M9 1L1 9" stroke="#222" strokeWidth="1.6" /></svg>
        </div>
        <BridgeSvg />
      </div>
      <SideTools />
    </div>
    <div className="h-[38px] shrink-0 flex flex-col bg-[#e2e2e2]">
      <div className="h-[4px] bg-[#e2e2e2]" />
      <div className="h-[20px] flex items-center pl-[4px] text-[12px] text-[#222] bg-gradient-to-r from-[#dcecf4] to-[#e8f2f6] border-b-2 border-[#6c6c6c]">
        信息窗口
        <svg width="9" height="11" viewBox="0 0 9 11" className="ml-auto mr-[10px]"><path d="M2 1H7M3 1V6M6 1V6M1 6H8M4.5 6V10" stroke="#777" fill="none" /></svg>
        <svg width="10" height="10" viewBox="0 0 10 10" className="mr-[34px]"><path d="M1 1L9 9M9 1L1 9" stroke="#555" strokeWidth="1.6" /></svg>
      </div>
      <div className="flex-1 flex items-start pl-[1px] overflow-hidden text-[12px] leading-[14px] text-[#333] bg-[#f2f2f2]">
        {['M', 'N', 'O', 'P'].map(k => <div key={k} className="w-[17px] h-[10px] bg-[#dcdcdc] border-x border-[#aaa]" />)}
        <div className="ml-[18px] -mt-[6px] font-bold whitespace-nowrap w-[48px]">命令信息</div>
        <div className="ml-[6px] w-px h-[10px] bg-[#222] -skew-x-[30deg]" />
        <div className="ml-[9px] -mt-[6px] whitespace-nowrap w-[48px]">分析信息</div>
        <div className="ml-[2px] w-px h-[10px] bg-[#222] skew-x-[30deg]" />
        <div className="ml-[254px] w-[32px] h-[11px] border-x border-b border-[#222] bg-[#e8e8e8]" />
      </div>
    </div>
  </div>
);

// ---- status bar ----
const StatusSelect = ({ text, w }: { text: string; w: string }) => (
  <div className={`${w} h-[18px] bg-white border border-[#555] flex items-center justify-between pl-[2px] shrink-0 text-[12px] text-[#222]`}>
    {text}
    <div className="w-[15px] h-full bg-[#e8e8e8] flex items-center justify-center"><Caret /></div>
  </div>
);

const StatusBar = () => (
  <div className="h-[20px] shrink-0 flex items-center bg-gradient-to-b from-[#eeeeee] to-[#dadada] text-[12px] text-[#222] whitespace-nowrap pl-[7px] border-t border-[#c4c4c4]">
    <span className="w-[133px] shrink-0">如想查找帮助, 请按F1!</span>
    <span className="w-[102px] shrink-0">无!</span>
    <span className="w-[162px] shrink-0 tracking-[0.3px]">U: 10.3746, 19.18342, 0</span>
    <span className="w-[162px] shrink-0 tracking-[0.3px]">G: 10.3746, 19.18342, 0</span>
    <StatusSelect text="tonf" w="w-[46px]" />
    <div className="ml-[5px]"><StatusSelect text="m" w="w-[47px]" /></div>
    <div className="ml-[10px] flex gap-[4px] opacity-60">
      {['M1 8H15M8 1V15', 'M4 3V13M12 3V13M1 8H15', 'M5 2L13 8L5 14Z'].map((d, i) => (
        <div key={i} className="w-[18px] h-[19px] bg-[#e0e0e0] border border-[#c4c4c4] flex items-center justify-center">
          <svg width="14" height="14" viewBox="0 0 16 16"><path d={d} fill={i === 2 ? '#777' : 'none'} stroke="#888" /></svg>
        </div>
      ))}
    </div>
    <div className="ml-[7px]"><StatusSelect text="non" w="w-[44px]" /></div>
    <div className="w-[19px] h-[17px] bg-[#8ce8ee] ml-[28px]" />
  </div>
);

const Watermark = () => (
  <>
    <div className="absolute left-[780px] top-[493px] w-[172px] h-[56px] border-[3px] border-[#d88a88] bg-white/35 flex flex-col items-center pointer-events-none overflow-hidden">
      <div className="text-[27px] leading-[34px] text-[#c4504e] tracking-[7px] font-['Noto_Sans_CJK_SC',sans-serif] font-light whitespace-nowrap pl-[5px]">桥梁之家</div>
      <div className="text-[19.5px] leading-[16px] text-[#c03a3a] font-['Liberation_Sans',sans-serif] whitespace-nowrap">www.bridgehome.cn</div>
    </div>
    <svg width="17" height="17" viewBox="0 0 17 17" className="absolute left-[934px] top-[502px]">
      <circle cx="7" cy="7" r="5" fill="#fff" stroke="#8a8fa8" />
      <path d="M11 11L15 15" stroke="#8a8fa8" strokeWidth="2" />
      <path d="M12 3H16M14 1V5" stroke="#8a8fa8" />
    </svg>
  </>
);

export default function App() {
  return (
    <div className={`relative w-[962px] h-[553px] bg-white overflow-hidden ${FONT}`}>
      <div className="w-[960px] h-full flex flex-col">
        <TitleBar />
        <div className="flex-1 min-h-0 flex flex-col border-x-[3px] border-b-[3px] border-[#0e6a8a] bg-[#e2e2e2]">
          <MenuBar />
          <Toolbars />
          <Toolbar3 />
          <div className="flex-1 min-h-0 flex">
            <TreePanel />
            <ModelArea />
          </div>
          <StatusBar />
        </div>
      </div>
      <Watermark />
    </div>
  );
}
